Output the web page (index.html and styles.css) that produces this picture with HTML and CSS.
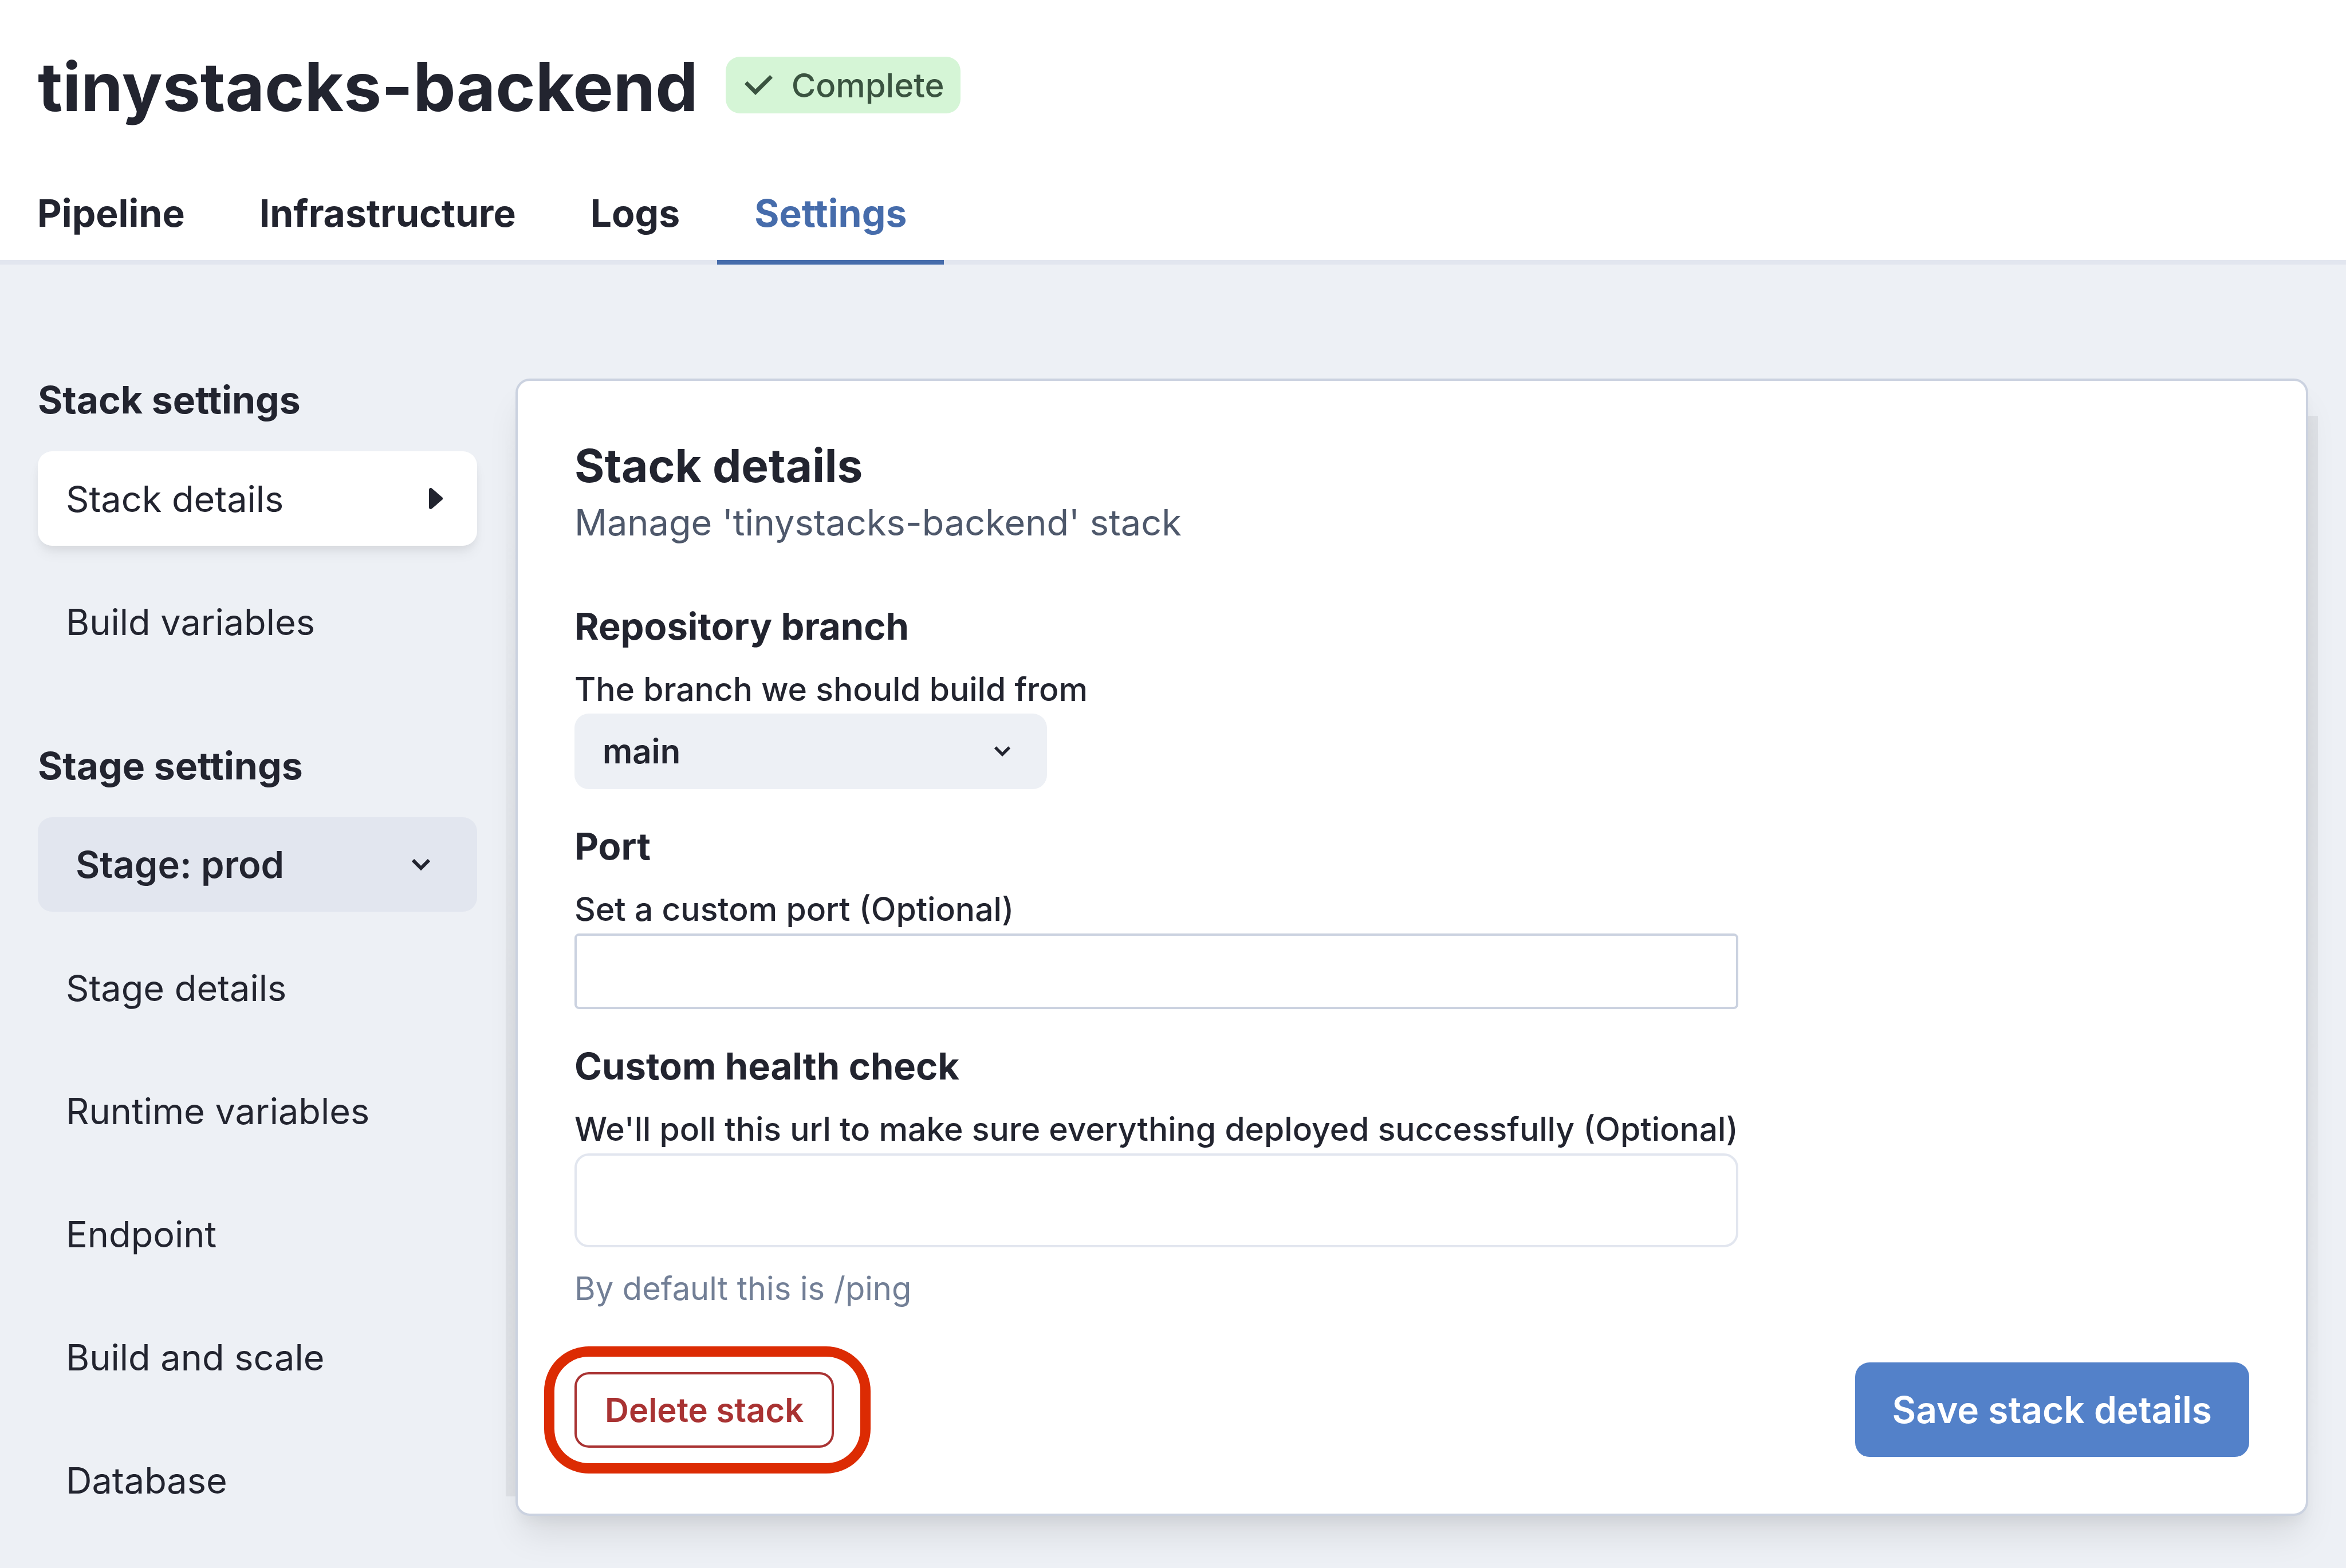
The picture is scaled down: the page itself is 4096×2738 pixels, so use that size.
FILE: index.html
```html
<!DOCTYPE html>
<html lang="en">
<head>
  <meta charset="utf-8">
  <meta name="viewport" content="width=device-width, initial-scale=1">
  <title>tinystacks-backend – Settings</title>
  <link rel="stylesheet" href="styles.css">
</head>
<body>
  <header class="header">
    <div class="title-row">
      <h1 class="title">tinystacks-backend</h1>
      <span class="badge">
        <svg class="badge-icon" viewBox="0 0 147 105" aria-hidden="true"><path d="M0 47 L14 32 L57 74 L133 0 L147 15 L57 105 Z" /></svg>
        Complete
      </span>
    </div>
    <nav class="tabs" aria-label="Stack">
      <a class="tab" href="#pipeline">Pipeline</a>
      <a class="tab" href="#infrastructure">Infrastructure</a>
      <a class="tab" href="#logs">Logs</a>
      <a class="tab tab-active" href="#settings" aria-current="page">Settings</a>
    </nav>
  </header>

  <div class="layout">
    <aside class="sidebar">
      <section class="nav-group">
        <h2 class="nav-title">Stack settings</h2>
        <a class="nav-item nav-item-active" href="#stack-details" aria-current="true">
          Stack details
          <svg class="nav-arrow" viewBox="0 0 24 37" aria-hidden="true"><path d="M3 3 V34 L21 18.500 Z" /></svg>
        </a>
        <a class="nav-item" href="#build-variables">Build variables</a>
      </section>
      <section class="nav-group">
        <h2 class="nav-title">Stage settings</h2>
        <div class="select select-stage">
          <select class="select-control" aria-label="Stage">
            <option>Stage: prod</option>
          </select>
          <svg class="chevron" viewBox="0 0 32 20" aria-hidden="true"><path d="M2 2 L16 16 L30 2" /></svg>
        </div>
        <a class="nav-item" href="#stage-details">Stage details</a>
        <a class="nav-item" href="#runtime-variables">Runtime variables</a>
        <a class="nav-item" href="#endpoint">Endpoint</a>
        <a class="nav-item" href="#build-and-scale">Build and scale</a>
        <a class="nav-item" href="#database">Database</a>
      </section>
    </aside>

    <main class="card">
      <h2 class="card-title">Stack details</h2>
      <p class="card-subtitle">Manage 'tinystacks-backend' stack</p>
      <form class="form">
        <section class="field">
          <h3 class="field-title">Repository branch</h3>
          <label class="field-label" for="branch">The branch we should build from</label>
          <div class="select select-branch">
            <select class="select-control" id="branch">
              <option>main</option>
            </select>
            <svg class="chevron chevron-small" viewBox="0 0 32 20" aria-hidden="true"><path d="M2 2 L16 16 L30 2" /></svg>
          </div>
        </section>
        <section class="field">
          <h3 class="field-title">Port</h3>
          <label class="field-label" for="port">Set a custom port (Optional)</label>
          <input class="input" id="port" type="text">
        </section>
        <section class="field">
          <h3 class="field-title">Custom health check</h3>
          <label class="field-label" for="health">We'll poll this url to make sure everything deployed successfully (Optional)</label>
          <input class="input input-large" id="health" type="text" aria-describedby="health-hint">
          <p class="hint" id="health-hint">By default this is /ping</p>
        </section>
        <div class="actions">
          <div class="highlight">
            <button class="button button-delete" type="button">Delete stack</button>
          </div>
          <button class="button button-save" type="submit">Save stack details</button>
        </div>
      </form>
    </main>
  </div>
</body>
</html>
```
FILE: styles.css
```css
:root {
  --text: #22242f;
  --muted: #4e586b;
  --hint: #727f96;
  --page: #edf0f5;
  --line: #e2e6ef;
  --line-strong: #cbd2e0;
  --blue: #466cab;
  --radius: 25px;
  --gutter: 66px;
}

* {
  box-sizing: border-box;
}

body {
  margin: 0;
  min-height: 100vh;
  background: var(--page);
  color: var(--text);
  font-family: Inter, "Liberation Sans", sans-serif;
  font-size: 63px;
}

h1, h2, h3, p {
  margin: 0;
}

a {
  color: inherit;
  text-decoration: none;
}

/* Header */

.header {
  padding-top: 80px;
  background: #fff;
  border-bottom: 8px solid var(--line);
}

.title-row {
  display: flex;
  align-items: flex-start;
  gap: 48px;
  padding: 0 var(--gutter);
  margin-bottom: 69px;
}

.title {
  font-size: 118px;
  line-height: 142px;
  font-weight: 700;
}

.badge {
  display: flex;
  align-items: center;
  gap: 33px;
  height: 99px;
  margin-top: 19px;
  padding: 0 28px 0 33px;
  border-radius: var(--radius);
  background: #d5f5d6;
  color: #3a5340;
  font-size: 58px;
  font-weight: 500;
}

.badge-icon {
  width: 49px;
  height: 35px;
  fill: currentColor;
}

.tabs {
  display: flex;
  margin-bottom: -8px;
}

.tab {
  padding: 41px 65px;
  border-bottom: 8px solid transparent;
  font-size: 66px;
  line-height: 81px;
  font-weight: 700;
}

.tab-active {
  border-color: var(--blue);
  color: var(--blue);
}

/* Page body */

.layout {
  display: grid;
  grid-template-columns: 767px 1fr;
  align-items: start;
  gap: 67px;
  padding: 199px var(--gutter) 89px;
}

.sidebar {
  display: grid;
  gap: 132px;
}

.nav-group {
  display: grid;
  gap: 50px;
}

.nav-title {
  margin-bottom: 3px;
  font-size: 66px;
  line-height: 74px;
  font-weight: 700;
}

.nav-item {
  display: flex;
  align-items: center;
  justify-content: space-between;
  height: 165px;
  padding: 0 60px 0 49px;
  border-radius: var(--radius);
}

.nav-item-active {
  background: #fff;
  box-shadow: 0 16px 24px -4px rgba(0, 0, 0, 0.06), 0 8px 16px -4px rgba(0, 0, 0, 0.06);
}

.nav-arrow {
  width: 24px;
  height: 37px;
  fill: currentColor;
  stroke: currentColor;
  stroke-width: 6;
  stroke-linejoin: round;
}

/* Drop-downs: the chevron shares the grid cell of the control */

.select {
  display: grid;
  align-items: center;
  justify-items: end;
}

.select > * {
  grid-area: 1 / 1;
}

.select-control {
  width: 100%;
  height: 132px;
  padding: 0 49px;
  border: 0;
  border-radius: var(--radius);
  appearance: none;
  background: var(--page);
  color: inherit;
  font: inherit;
  font-size: 58px;
  font-weight: 600;
}

.select-stage .select-control {
  height: 165px;
  padding: 0 var(--gutter);
  background: var(--line);
  font-size: 65px;
}

.select-branch {
  width: 825px;
}

.chevron {
  width: 32px;
  height: 20px;
  margin-right: 82px;
  fill: none;
  stroke: currentColor;
  stroke-width: 6;
  pointer-events: none;
}

.chevron-small {
  width: 28px;
  height: 18px;
  margin-right: 64px;
}

/* Card */

.card {
  position: relative;
  padding: 99px;
  border: 4px solid var(--line-strong);
  border-radius: var(--radius);
  background: #fff;
  box-shadow: 0 41px 62px -12px rgba(0, 0, 0, 0.1), 0 16px 25px -8px rgba(0, 0, 0, 0.05);
}

/* Darker edges of the shadow beside the card */

.card::before,
.card::after {
  content: "";
  position: absolute;
  width: 17px;
}

.card::before {
  top: 60px;
  bottom: 30px;
  right: 100%;
  margin-right: 4px;
  background: linear-gradient(to bottom, transparent, rgba(0, 0, 0, 0.06) 65%);
}

.card::after {
  top: 61px;
  bottom: 60px;
  left: 100%;
  margin-left: 4px;
  background: linear-gradient(to bottom, rgba(0, 0, 0, 0.06) 35%, transparent);
}

.card-title {
  font-size: 80px;
  line-height: 98px;
  font-weight: 700;
}

.card-subtitle {
  margin-bottom: 92px;
  color: var(--muted);
  font-size: 63px;
  line-height: 100px;
}

.form {
  display: grid;
  gap: 60px;
}

.field {
  max-width: 2032px;
}

.field-title {
  margin-bottom: 28px;
  font-size: 65px;
  line-height: 80px;
  font-weight: 700;
}

.field-label {
  display: block;
  font-size: 57px;
  line-height: 84px;
  font-weight: 500;
  white-space: nowrap;
}

.input {
  display: block;
  width: 100%;
  height: 132px;
  padding: 0 48px;
  border: 4px solid var(--line-strong);
  border-radius: 8px;
  background: #fff;
  color: inherit;
  font: inherit;
}

.input-large {
  height: 164px;
  border-color: var(--line);
  border-radius: var(--radius);
}

.hint {
  margin-top: 32px;
  color: var(--hint);
  font-size: 56px;
  line-height: 80px;
}

.actions {
  display: flex;
  align-items: center;
  justify-content: space-between;
  margin-top: 29px;
}

.button {
  border: 0;
  border-radius: var(--radius);
  font: inherit;
  font-weight: 600;
}

.button-delete {
  height: 132px;
  padding: 0 49px;
  border: 4px solid #a93333;
  background: #fff;
  color: #a93333;
  font-size: 58px;
}

.button-save {
  height: 165px;
  padding: 0 65px;
  background: #5381c9;
  color: #fff;
  font-size: 64px;
}

/* Red ring round the delete button */

.highlight {
  position: relative;
}

.highlight::after {
  content: "";
  position: absolute;
  inset: -45px -64px -45px -53px;
  border: 18px solid #dc2b03;
  border-radius: 78px;
  pointer-events: none;
}
```
